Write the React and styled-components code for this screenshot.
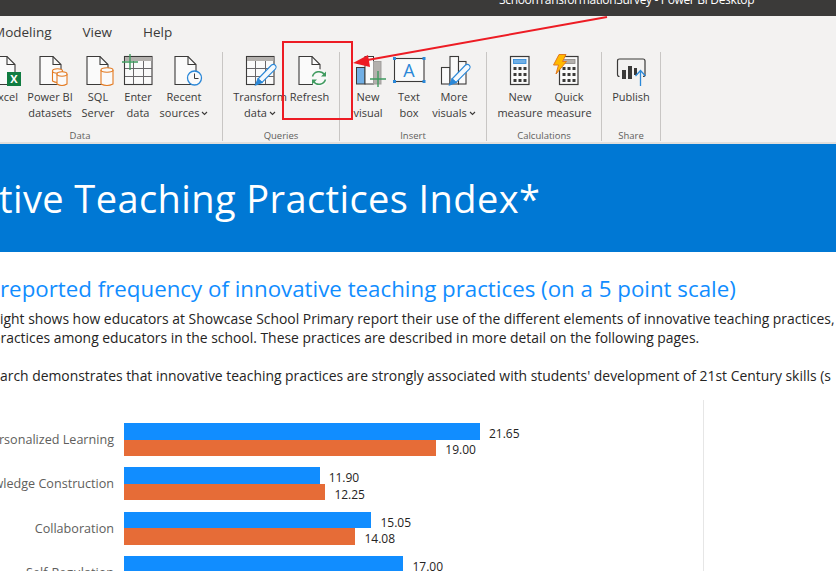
import React from 'react';
import styled, { createGlobalStyle } from 'styled-components';

const GlobalStyle = createGlobalStyle`
  html, body {
    margin: 0;
    background: #fff;
  }
`;

const Page = styled.div`
  width: 836px;
  height: 571px;
  position: relative;
  overflow: hidden;
  display: flex;
  flex-direction: column;
  font-family: 'Open Sans', 'Noto Sans', sans-serif;
  color: #252423;
`;

const TitleBar = styled.div`
  height: 16px;
  flex: none;
  background: #3b3a39;
  overflow: hidden;
  padding-left: 499px;
`;

const AppTitle = styled.div`
  margin-top: -9px;
  color: #fff;
  font-size: 12px;
  letter-spacing: -0.35px;
  line-height: 18px;
  white-space: nowrap;
`;

const Tabs = styled.div`
  height: 32px;
  flex: none;
  background: #f3f2f1;
  display: flex;
  align-items: center;
  gap: 31px;
  margin-left: -7px;
  padding-bottom: 4px;
`;

const Tab = styled.div`
  font-size: 13.5px;
  color: #3b3a39;
`;

const Ribbon = styled.div`
  height: 90px;
  flex: none;
  background: #f3f2f1;
  display: flex;
  border-bottom: 2px solid #e1dfdd;
`;

const Group = styled.div`
  flex: none;
  width: ${(p) => p.$width}px;
  margin-left: ${(p) => p.$shift || 0}px;
  margin-bottom: 1px;
  box-sizing: border-box;
  border-right: 1px solid #c8c6c4;
  display: flex;
  flex-direction: column;
`;

const Tools = styled.div`
  flex: 1;
  display: flex;
  padding-left: ${(p) => p.$pad}px;
`;

const GroupName = styled.div`
  text-align: center;
  font-size: 9.5px;
  line-height: 14px;
  height: 12px;
  color: #605e5c;
`;

const Tool = styled.div`
  flex: none;
  width: ${(p) => p.$width}px;
  display: flex;
  flex-direction: column;
  align-items: center;
`;

const ToolIcon = styled.svg`
  width: 40px;
  height: 34px;
  flex: none;
  margin-top: 2px;
  overflow: visible;
`;

const ToolLabel = styled.div`
  margin-top: 1px;
  font-size: 11px;
  line-height: 16px;
  text-align: center;
  white-space: nowrap;
  color: #3b3a39;
`;

const Chevron = styled.svg`
  width: 7px;
  height: 5px;
  margin-left: 2px;
  vertical-align: 1px;
`;

const Banner = styled.div`
  height: 108px;
  flex: none;
  background: #0078d4;
  display: flex;
  align-items: center;
  margin-left: -1px;
  color: #fff;
  font-size: 38px;
  letter-spacing: 0.4px;
  white-space: nowrap;
`;

const Content = styled.div`
  flex: 1;
  background: #fff;
  display: flex;
  flex-direction: column;
`;

const Heading = styled.div`
  margin-top: 21px;
  font-size: 22.3px;
  line-height: 32px;
  color: #118dff;
  white-space: nowrap;
`;

const Body = styled.div`
  margin-top: 4px;
  font-size: 13.9px;
  line-height: 19px;
  white-space: nowrap;
  color: #252423;
`;

const BodyLine = styled.div`
  height: 19px;
  margin-left: ${(p) => p.$shift || 0}px;
`;

const ChartArea = styled.div`
  width: 704px;
  height: 300px;
  box-sizing: border-box;
  margin-top: 15px;
  padding-top: 23px;
  border-right: 1px solid #e6e6e6;
  display: flex;
  flex-direction: column;
  gap: 11.4px;
`;

const ChartRow = styled.div`
  display: grid;
  grid-template-columns: 114px 1fr;
  column-gap: 10px;
  align-items: center;
`;

const Category = styled.div`
  display: flex;
  justify-content: flex-end;
  white-space: nowrap;
  font-size: 12.6px;
  color: #605e5c;
`;

const Bars = styled.div`
  display: flex;
  flex-direction: column;
`;

const BarLine = styled.div`
  height: ${(p) => p.$height}px;
  display: flex;
  align-items: center;
`;

const Bar = styled.div`
  height: 100%;
  background: ${(p) => p.$color};
`;

const BarValue = styled.span`
  margin-left: 9px;
  margin-top: 4px;
  font-size: 12px;
  color: #252423;
`;

const RedBox = styled.div`
  position: absolute;
  left: 282px;
  top: 41px;
  width: 67px;
  height: 75px;
  border: 2px solid #ed1c24;
`;

const Callout = styled.svg`
  position: absolute;
  left: 0;
  top: 0;
  width: 836px;
  height: 120px;
  pointer-events: none;
`;

const DARK = '#3b3a39';
const BLUE = '#2b88d8';
const ORANGE = '#e3791f';
const GREEN = '#3f9a5f';

function Doc({ x }) {
  return (
    <g fill="#fafafa" stroke={DARK} strokeWidth="1.1">
      <path d={`M${x} 2.5 H${x + 13} L${x + 21} 10.5 V30.5 H${x} Z`} />
      <path d={`M${x + 13} 2.5 V10.5 H${x + 21}`} fill="none" />
    </g>
  );
}

function Cylinder({ x, y, w, h }) {
  return (
    <g fill="#fafafa" stroke={ORANGE} strokeWidth="1.1">
      <path d={`M${x} ${y + 2} V${y + h - 2} Q${x + w / 2} ${y + h + 1} ${x + w} ${y + h - 2} V${y + 2}`} />
      <ellipse cx={x + w / 2} cy={y + 2} rx={w / 2} ry="2.2" />
    </g>
  );
}

function Grid() {
  return (
    <g>
      <rect x="6.5" y="2.5" width="27.5" height="28" fill="#fafafa" stroke={DARK} strokeWidth="1.1" />
      <rect x="7" y="3" width="26.5" height="4" fill="#b3b0ad" />
      <path d="M15.5 7V30M25.5 7V30M7 14.5H34M7 22.5H34" stroke="#69676a" strokeWidth="1" fill="none" />
    </g>
  );
}

function Pencil() {
  return (
    <g fill="#f4f9fd" stroke={BLUE} strokeWidth="1.1">
      <path d="M18 25 L31.5 11 Q33.5 9.5 35.5 11.3 Q37 13.2 35.5 15 L22 28.5 Z" />
      <path d="M15.5 31 L18 25 L22 28.5 Z" fill={BLUE} />
    </g>
  );
}

function Plus({ cx, cy, r = 8 }) {
  return (
    <path d={`M${cx - r} ${cy}H${cx + r}M${cx} ${cy - r}V${cy + r}`} stroke={GREEN} strokeWidth="1.4" fill="none" />
  );
}

function Calculator({ x, screen }) {
  const keys = [];
  [13, 19, 25].forEach((y) => {
    [3.5, 8.5, 13.5].forEach((dx) => {
      keys.push(<rect key={`${y}-${dx}`} x={x + dx} y={y} width="3" height="3" fill={DARK} />);
    });
  });
  return (
    <g>
      <rect x={x + 0.5} y="2.5" width="18.5" height="28" fill="#fafafa" stroke={DARK} strokeWidth="1.2" />
      <rect x={x + 3.5} y="5.5" width="12.5" height="4" fill={screen} stroke={screen === '#b3b0ad' ? '#8a8886' : BLUE} strokeWidth="0.8" />
      {keys}
    </g>
  );
}

const ExcelIcon = () => (
  <>
    <Doc x={9} />
    <rect x="22" y="18" width="14" height="14" fill="#107c41" />
    <text x="29" y="29" fontSize="11" fontWeight="700" textAnchor="middle" fill="#fff">X</text>
  </>
);

const DatasetsIcon = () => (
  <>
    <Doc x={10} />
    <Cylinder x={22.5} y={15} w={10} h={14} />
    <Cylinder x={27} y={18} w={10} h={14} />
  </>
);

const SqlIcon = () => (
  <>
    <Doc x={9} />
    <Cylinder x={23} y={14} w={12} h={18} />
  </>
);

const EnterIcon = () => (
  <>
    <Grid />
    <Plus cx={12} cy={8} />
  </>
);

const RecentIcon = () => (
  <>
    <Doc x={11} />
    <circle cx="30.5" cy="24" r="7" fill="#fafafa" stroke={BLUE} strokeWidth="1.3" />
    <path d="M30.5 19.5V24.5H34.5" fill="none" stroke={DARK} strokeWidth="1" />
  </>
);

const TransformIcon = () => (
  <>
    <Grid />
    <Pencil />
  </>
);

const RefreshIcon = () => (
  <>
    <Doc x={9} />
    <circle cx="29" cy="24" r="9" fill="#f8f8f8" />
    <g fill="none" stroke={GREEN} strokeWidth="1.5">
      <path d="M22.5 22.5 A6.8 6.8 0 0 1 34.5 20.5" />
      <path d="M35.5 25.5 A6.8 6.8 0 0 1 23.5 27.5" />
    </g>
    <path d="M36 17.5V22.5H31Z M22 30.5V25.5H27Z" fill={GREEN} />
  </>
);

const NewVisualIcon = () => (
  <>
    <rect x="8.5" y="13.5" width="8.5" height="16.5" fill="#71afe5" stroke={DARK} strokeWidth="1" />
    <rect x="17" y="2.5" width="8.5" height="27.5" fill="#fafafa" stroke={DARK} strokeWidth="1" />
    <rect x="25.5" y="7.5" width="7.5" height="22.5" fill="#b3b0ad" stroke="#a19f9d" strokeWidth="1" />
    <Plus cx={30} cy={25} />
  </>
);

const TextBoxIcon = () => (
  <>
    <rect x="5.5" y="4.5" width="29.5" height="23" fill="#fafafa" stroke={DARK} strokeWidth="1.1" />
    {[[5.5, 4.5], [35, 4.5], [5.5, 27.5], [35, 27.5]].map(([x, y]) => (
      <rect key={`${x}-${y}`} x={x - 1.5} y={y - 1.5} width="3" height="3" fill={BLUE} />
    ))}
    <text x="20" y="22.5" fontSize="18" textAnchor="middle" fill={BLUE}>A</text>
  </>
);

const MoreVisualsIcon = () => (
  <>
    <rect x="7.5" y="13.5" width="8.5" height="16.5" fill="#fafafa" stroke={DARK} strokeWidth="1.1" />
    <rect x="16" y="2.5" width="8.5" height="27.5" fill="#fafafa" stroke={DARK} strokeWidth="1.1" />
    <rect x="24.5" y="7.5" width="7.5" height="22.5" fill="#fafafa" stroke={DARK} strokeWidth="1.1" />
    <Pencil />
  </>
);

const NewMeasureIcon = () => <Calculator x={10} screen="#71afe5" />;

const QuickMeasureIcon = () => (
  <>
    <Calculator x={10} screen="#b3b0ad" />
    <path d="M10 0.5H17L13.5 7.5H17.5L7 20L9.5 11H4.5Z" fill="#ffb900" stroke={ORANGE} strokeWidth="1" />
  </>
);

const PublishIcon = () => (
  <>
    <path d="M8.5 22.5 Q6.5 22.5 6.5 20.5 V7 Q6.5 5 8.5 5 H32 Q34 5 34 7 V20.5 Q34 22.5 32 22.5" fill="none" stroke={DARK} strokeWidth="1.2" />
    <path d="M11 18h4v9h-4z M17 14h4v13h-4z M23 16h3v7h-3z" fill={DARK} transform="translate(0 -2)" />
    <path d="M29.5 32V17M24.5 22L29.5 16.5L34.5 22" fill="none" stroke={BLUE} strokeWidth="1.3" />
  </>
);

const groups = [
  {
    name: 'Data',
    shift: -62,
    width: 285,
    pad: 47,
    tools: [
      { icon: ExcelIcon, lines: ['Excel'], width: 40 },
      { icon: DatasetsIcon, lines: ['Power BI', 'datasets'], width: 50 },
      { icon: SqlIcon, lines: ['SQL', 'Server'], width: 46 },
      { icon: EnterIcon, lines: ['Enter', 'data'], width: 34 },
      { icon: RecentIcon, lines: ['Recent', 'sources'], width: 58, menu: true },
    ],
  },
  {
    name: 'Queries',
    width: 117,
    pad: 10,
    tools: [
      { icon: TransformIcon, lines: ['Transform', 'data'], width: 54, menu: true },
      { icon: RefreshIcon, lines: ['Refresh'], width: 45 },
    ],
  },
  {
    name: 'Insert',
    width: 147,
    pad: 9,
    tools: [
      { icon: NewVisualIcon, lines: ['New', 'visual'], width: 38 },
      { icon: TextBoxIcon, lines: ['Text', 'box'], width: 44 },
      { icon: MoreVisualsIcon, lines: ['More', 'visuals'], width: 46, menu: true },
    ],
  },
  {
    name: 'Calculations',
    width: 115,
    pad: 8,
    tools: [
      { icon: NewMeasureIcon, lines: ['New', 'measure'], width: 50 },
      { icon: QuickMeasureIcon, lines: ['Quick', 'measure'], width: 48 },
    ],
  },
  {
    name: 'Share',
    width: 59,
    pad: 6,
    tools: [{ icon: PublishIcon, lines: ['Publish'], width: 46 }],
  },
];

const scores = [
  { name: 'Personalized Learning', a: 21.65, b: 19.0 },
  { name: 'Knowledge Construction', a: 11.9, b: 12.25 },
  { name: 'Collaboration', a: 15.05, b: 14.08 },
  { name: 'Self-Regulation', a: 17.0, b: 16.4 },
];

const UNIT = 16.44;

function RibbonTool({ tool }) {
  const Icon = tool.icon;
  return (
    <Tool $width={tool.width}>
      <ToolIcon viewBox="0 0 40 34">
        <Icon />
      </ToolIcon>
      <ToolLabel>
        {tool.lines.map((line, i) => (
          <div key={line}>
            {line}
            {tool.menu && i === tool.lines.length - 1 && (
              <Chevron viewBox="0 0 7 5">
                <path d="M1 1L3.5 3.5L6 1" fill="none" stroke={DARK} strokeWidth="1.1" />
              </Chevron>
            )}
          </div>
        ))}
      </ToolLabel>
    </Tool>
  );
}

export default function App() {
  return (
    <Page>
      <GlobalStyle />
      <TitleBar>
        <AppTitle>SchoolTransformationSurvey - Power BI Desktop</AppTitle>
      </TitleBar>
      <Tabs>
        <Tab>Modeling</Tab>
        <Tab>View</Tab>
        <Tab>Help</Tab>
      </Tabs>
      <Ribbon>
        {groups.map((group) => (
          <Group key={group.name} $width={group.width} $shift={group.shift}>
            <Tools $pad={group.pad}>
              {group.tools.map((tool) => (
                <RibbonTool key={tool.lines.join(' ')} tool={tool} />
              ))}
            </Tools>
            <GroupName>{group.name}</GroupName>
          </Group>
        ))}
      </Ribbon>
      <Banner>tive Teaching Practices Index*</Banner>
      <Content>
        <Heading>reported frequency of innovative teaching practices (on a 5 point scale)</Heading>
        <Body>
          <BodyLine>ight shows how educators at Showcase School Primary report their use of the different elements of innovative teaching practices,</BodyLine>
          <BodyLine $shift={-8}>practices among educators in the school. These practices are described in more detail on the following pages.</BodyLine>
          <BodyLine />
          <BodyLine>arch demonstrates that innovative teaching practices are strongly associated with students' development of 21st Century skills (s</BodyLine>
        </Body>
        <ChartArea>
          {scores.map((row) => (
            <ChartRow key={row.name}>
              <Category>{row.name}</Category>
              <Bars>
                <BarLine $height={16.5}>
                  <Bar $color="#118dff" style={{ width: row.a * UNIT }} />
                  <BarValue>{row.a.toFixed(2)}</BarValue>
                </BarLine>
                <BarLine $height={16.5}>
                  <Bar $color="#e66c37" style={{ width: row.b * UNIT }} />
                  <BarValue>{row.b.toFixed(2)}</BarValue>
                </BarLine>
              </Bars>
            </ChartRow>
          ))}
        </ChartArea>
      </Content>
      <RedBox />
      <Callout viewBox="0 0 836 120">
        <path d="M607 17L362 61" stroke="#ed1c24" strokeWidth="2" fill="none" />
        <path d="M353 63L368 55L370 67Z" fill="#ed1c24" />
      </Callout>
    </Page>
  );
}
